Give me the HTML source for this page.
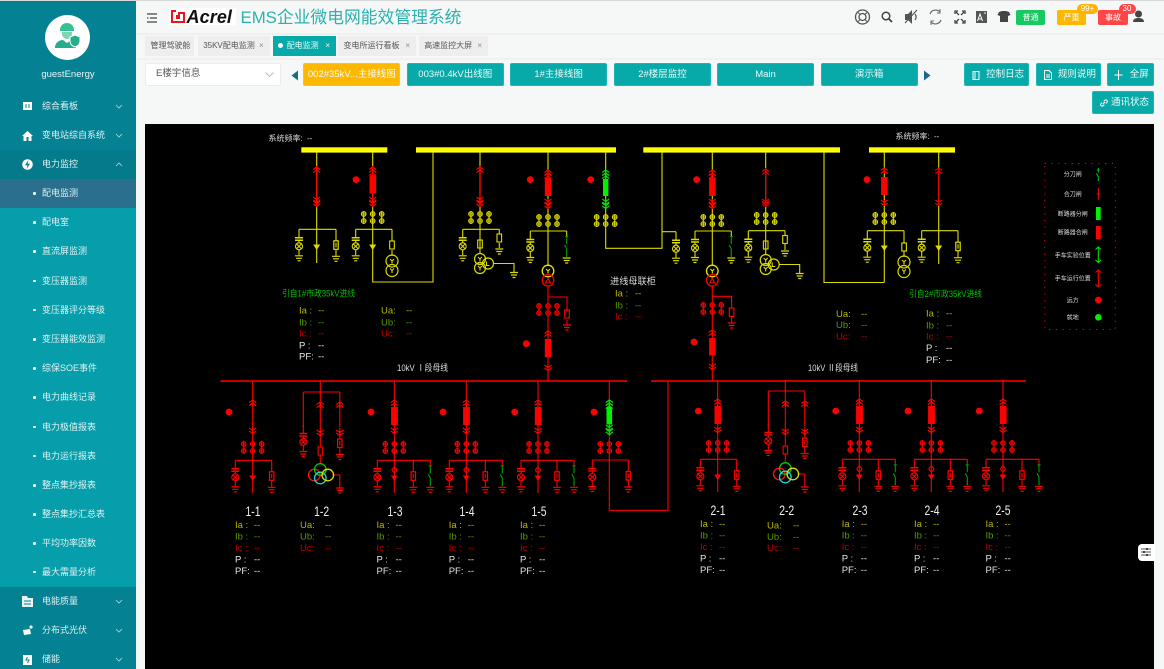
<!DOCTYPE html>
<html lang="zh"><head><meta charset="utf-8"><title>EMS</title>
<style>
*{box-sizing:border-box}
html,body{margin:0;padding:0}
body{width:1164px;height:669px;overflow:hidden;position:relative;background:#f6f7f7;font-family:"Liberation Sans","Noto Sans CJK SC",sans-serif}
#wrap{position:absolute;left:0;top:0;width:1164px;height:669px;overflow:hidden;filter:blur(.3px)}
.abs{position:absolute}
#side{position:absolute;left:0;top:1px;width:136px;height:668px;background:#048193;color:#dff2f3}
.top{position:absolute;left:0;top:0;width:1164px;height:1px;background:#d9d9d9}
.m{position:absolute;left:0;width:136px;height:29.2px;line-height:29px;font-size:9px;padding-left:42px;white-space:nowrap}
.m svg.ic{position:absolute;left:22px;top:9px}
.m svg.ch{position:absolute;left:115px;top:12px}
.s{background:#069eab}.s:before{content:"";position:absolute;left:33px;top:13px;width:2.5px;height:2.5px;border-radius:50%;background:#fff}
.tab{position:absolute;top:36px;height:19.5px;line-height:19px;background:#eeeeee;color:#555;font-size:8px;padding-left:5.5px;white-space:nowrap}
.tab i{position:absolute;right:6px;top:0;font-style:normal;color:#888;font-size:8px}
.btn{position:absolute;top:62.5px;height:23px;line-height:22px;background:#07aaa8;color:#eafafa;font-size:9.5px;text-align:center;border-radius:2px;border:1px solid #1bb5b3;white-space:nowrap}
.tag{position:absolute;top:10px;height:15px;line-height:15px;color:#fff;font-size:8px;text-align:center;border-radius:2px}
.bd{position:absolute;top:3.5px;height:10px;line-height:10px;color:#fff;font-size:8px;text-align:center;border-radius:5px}
#dia{position:absolute;left:0;top:0}
#dia text{font-family:"Liberation Sans","Noto Sans CJK SC",sans-serif;font-size:9.5px;stroke:none;fill:#ddd}
#dia .a{fill:#b8b800}#dia .b{fill:#569a00}#dia .c{fill:#c00000}#dia .w{fill:#e4e4e4}
#dia .g{fill:#00c000;font-size:9px}#dia .t{font-size:8px}#dia .l{font-size:6px;text-anchor:middle}
#dia .n{font-size:14px;text-anchor:middle;fill:#eee}
</style></head><body>
<div id="wrap">
<div class="top"></div>
<div id="side">
<div class="abs" style="left:45px;top:14px;width:45px;height:45px;border-radius:50%;background:#fff"></div>
<svg class="abs" style="left:54px;top:20px" width="30" height="30" viewBox="0 0 30 30"><path d="M6 9a7 7 0 0 1 14 0v1H6z" fill="#35c08f"/><path d="M8 11h10v2a5 5 0 0 1-10 0z" fill="#7ad6b3"/><path d="M1 27c0-6 5-8 8-8l4 3 4-3c2 0 4 .6 5 2v6z" fill="#26ad8b"/><path d="M21 14l5 2v4c0 3-2 5-5 6-3-1-5-3-5-6v-4z" fill="#26ad8b" stroke="#fff"/></svg>
<div class="abs" style="left:0;top:68px;width:136px;text-align:center;font-size:9.5px;line-height:12px;color:#e6f5f5">guestEnergy</div>

<div class="m" style="top:90.5px"><svg class="ic" width="11" height="11" viewBox="0 0 11 11"><path d="M1 1h9v8H1z" fill="#fff"/><path d="M4 3v4M7 3v4M0 10h11" stroke="#048193"/></svg>综合看板<svg class="ch" width="8" height="5" viewBox="0 0 8 5"><path d="M1 1l3 3 3-3" fill="none" stroke="#a8dfe0" stroke-width=".8"/></svg></div>
<div class="m" style="top:119.6px"><svg class="ic" width="11" height="11" viewBox="0 0 11 11"><path d="M5.5 1L11 6H9.5v5h-8V6H0z" fill="#fff"/><path d="M4.5 7h2v4h-2z" fill="#048193"/></svg>变电站综自系统<svg class="ch" width="8" height="5" viewBox="0 0 8 5"><path d="M1 1l3 3 3-3" fill="none" stroke="#a8dfe0" stroke-width=".8"/></svg></div>
<div class="m" style="top:148.8px;background:#047a8a"><svg class="ic" width="11" height="11" viewBox="0 0 11 11"><circle cx="5.5" cy="5.5" r="5.3" fill="#fff"/><path d="M6.5 1L3 6.300h2.400L4.500 10 8 4.700H5.600z" fill="#047a8a"/></svg>电力监控<svg class="ch" width="8" height="5" viewBox="0 0 8 5"><path d="M1 4l3-3 3 3" fill="none" stroke="#a8dfe0" stroke-width=".8"/></svg></div>
<div class="m s" style="top:178px;background:#2a6f8d">配电监测</div>
<div class="m s" style="top:207.200px">配电室</div>
<div class="m s" style="top:236.400px">直流屏监测</div>
<div class="m s" style="top:265.600px">变压器监测</div>
<div class="m s" style="top:294.800px">变压器评分等级</div>
<div class="m s" style="top:324px">变压器能效监测</div>
<div class="m s" style="top:353.200px">综保SOE事件</div>
<div class="m s" style="top:382.400px">电力曲线记录</div>
<div class="m s" style="top:411.600px">电力极值报表</div>
<div class="m s" style="top:440.800px">电力运行报表</div>
<div class="m s" style="top:470px">整点集抄报表</div>
<div class="m s" style="top:499.200px">整点集抄汇总表</div>
<div class="m s" style="top:528.400px">平均功率因数</div>
<div class="m s" style="top:556.600px;height:29.400px">最大需量分析</div>
<div class="m" style="top:586px"><svg class="ic" width="11" height="11" viewBox="0 0 11 11"><path d="M0 0h5l1 2h5v9H0z" fill="#e8f6f6"/><path d="M2 5h7M2 8h7" stroke="#048193"/></svg>电能质量<svg class="ch" width="8" height="5" viewBox="0 0 8 5"><path d="M1 1l3 3 3-3" fill="none" stroke="#a8dfe0" stroke-width=".8"/></svg></div>
<div class="m" style="top:615px"><svg class="ic" width="11" height="11" viewBox="0 0 11 11"><path d="M1 5l7-1 1 5-7 1z" fill="#fff"/><circle cx="9" cy="2" r="1.600" fill="#fff"/></svg>分布式光伏<svg class="ch" width="8" height="5" viewBox="0 0 8 5"><path d="M1 1l3 3 3-3" fill="none" stroke="#a8dfe0" stroke-width=".8"/></svg></div>
<div class="m" style="top:644px"><svg class="ic" width="11" height="11" viewBox="0 0 11 11"><path d="M1 1h9v10H1z" fill="#fff"/><path d="M5.500 3L4 6h3l-1.500 3" stroke="#048193" fill="none"/></svg>储能<svg class="ch" width="8" height="5" viewBox="0 0 8 5"><path d="M1 1l3 3 3-3" fill="none" stroke="#a8dfe0" stroke-width=".8"/></svg></div>
</div>

<!-- header -->
<svg class="abs" style="left:147px;top:13px" width="11" height="10" viewBox="0 0 11 10"><path d="M0 1h10M3 5h7M0 9h10M0 5h1.500" stroke="#444" stroke-width="1.300"/></svg>
<div class="abs" style="left:169px;top:8px;width:67px;height:17px;background:#fff"></div>
<svg class="abs" style="left:171px;top:10px" width="14" height="14" viewBox="0 0 14 14"><path d="M0 0h5v2H2v9h10V4h-3v5H5V5h2V2h7v11H0z" fill="#e8161c"/></svg>
<div class="abs" style="left:186.500px;top:7px;font:italic bold 18px/20px 'Liberation Sans',sans-serif;color:#111;letter-spacing:.1px">Acrel</div>
<div class="abs" style="left:240.500px;top:6px;font-size:16.800px;line-height:24px;color:#2bb2ae;white-space:nowrap">EMS企业微电网能效管理系统</div>
<div class="abs" style="left:136px;top:33px;width:1028px;height:2px;background:#f0f0f0"></div>

<svg class="abs" style="left:850px;top:5px" width="300" height="24" viewBox="850 5 300 24" fill="none">
<circle cx="862.500" cy="17" r="7" stroke="#555" stroke-width="1.300"/><circle cx="862.500" cy="17" r="3.500" stroke="#555" stroke-width="1.300"/><path d="M858 12.500l2 2M867 12.500l-2 2M858 21.500l2-2M867 21.500l-2-2" stroke="#555"/>
<circle cx="886" cy="16" r="3.800" stroke="#444" stroke-width="1.500"/><path d="M889 19l3 3" stroke="#444" stroke-width="1.800"/>
<path d="M905 14h3l4-4v14l-4-4h-3z" fill="#555"/><path d="M905 23l12-13M915 14c1.500 2 1.500 4 0 6" stroke="#555" stroke-width="1.200"/>
<path d="M930 14a6 6 0 0 1 10-2M941 20a6 6 0 0 1-10 2" stroke="#666" stroke-width="1.200"/><path d="M940 9v4h-3M931 25v-4h3" stroke="#666"/>
<path d="M955 14v-3h3M962 11h3v3M965 20v3h-3M958 23h-3v-3M956 12l3 3M964 12l-3 3M964 22l-3-3M956 22l3-3" stroke="#444" stroke-width="1.300"/>
<rect x="976" y="11" width="11" height="12" fill="#555"/><path d="M977.500 21l2.500-7 2.500 7M978.500 19h3M984 13h2" stroke="#fff"/>
<path d="M999 12l3-1h4l3 1 1.500 3-2.500 1v6h-8v-6l-2.500-1z" fill="#444"/>
<circle cx="1138.500" cy="14" r="3.500" fill="#444"/><path d="M1133 22c0-3 2.500-4 5.500-4s5.500 1 5.500 4z" fill="#444"/>
</svg>
<div class="tag" style="left:1016px;width:29px;background:#18c860">普通</div>
<div class="tag" style="left:1057px;width:29px;background:#ffb800">严重</div>
<div class="tag" style="left:1098px;width:30px;background:#ff4545">事故</div>
<div class="bd" style="left:1077px;width:21px;background:#ffb000">99+</div>
<div class="bd" style="left:1118.500px;width:17px;background:#ff4545">30</div>

<!-- tabs -->
<div class="tab" style="left:145px;width:49px">管理驾驶舱</div>
<div class="tab" style="left:197.700px;width:72px">35KV配电监测<i>×</i></div>
<div class="tab" style="left:272.700px;width:63.300px;background:#07aaa8;color:#e8fafa;padding-left:14px"><span class="abs" style="left:5px;top:7px;width:5px;height:5px;border-radius:50%;background:#fff"></span>配电监测<i style="color:#e8fafa">×</i></div>
<div class="tab" style="left:338px;width:78px">变电所运行看板<i>×</i></div>
<div class="tab" style="left:418.700px;width:69.300px">高速监控大屏<i>×</i></div>
<div class="abs" style="left:136px;top:57.500px;width:1028px;height:2px;background:#f1f1f1"></div>

<!-- toolbar -->
<div class="abs" style="left:145px;top:63px;width:136px;height:22.500px;background:#fff;border:1px solid #ececec;border-radius:2px;font-size:9.500px;line-height:20px;color:#555;padding-left:10px">E楼宇信息<svg class="abs" style="left:119px;top:8px" width="9" height="5" viewBox="0 0 9 5"><path d="M.5.500l4 4 4-4" fill="none" stroke="#bbb"/></svg></div>
<svg class="abs" style="left:291px;top:70px" width="8" height="11"><path d="M7 .500V10.500L.500 5.500z" fill="#1b6a8a"/></svg>
<div class="btn" style="left:303.300px;width:97px;background:#ffb800;border-color:#ffc01f">002#35kV...主接线图</div>
<div class="btn" style="left:407px;width:96.500px">003#0.4kV出线图</div>
<div class="btn" style="left:510.300px;width:96.700px">1#主接线图</div>
<div class="btn" style="left:614px;width:97px">2#楼层监控</div>
<div class="btn" style="left:717px;width:97px">Main</div>
<div class="btn" style="left:820.700px;width:97px">演示箱</div>
<svg class="abs" style="left:923px;top:70px" width="8" height="11"><path d="M1 .500V10.500L7.500 5.500z" fill="#1b6a8a"/></svg>
<div class="btn" style="left:964px;width:65.300px;height:23.500px;padding-left:17px">控制日志<svg class="abs" style="left:7px;top:7px" width="8" height="9"><path d="M1 .500h6v8H1zM3 .500v8" fill="none" stroke="#fff"/></svg></div>
<div class="btn" style="left:1035.700px;width:65.300px;height:23.500px;padding-left:17px">规则说明<svg class="abs" style="left:7px;top:6px" width="8" height="10"><path d="M.500.500h4.500l2.500 2.500v6.500h-7zM2 5h4M2 7h4" fill="none" stroke="#fff"/></svg></div>
<div class="btn" style="left:1107.300px;width:47px;height:23.500px;padding-left:17px">全屏<svg class="abs" style="left:6px;top:6px" width="9" height="10"><path d="M4.500 0v10M.500 5h8" stroke="#fff"/></svg></div>
<div class="btn" style="left:1091.700px;top:90.500px;width:62.600px;height:23.500px;padding-left:14px">通讯状态<svg class="abs" style="left:7px;top:7px" width="8" height="8"><path d="M3 5l2-2M2 3.500L.800 5a1.500 1.500 0 0 0 2 2l1.500-1.300M6 4.500L7.200 3a1.500 1.500 0 0 0-2-2L3.700 2.300" fill="none" stroke="#fff"/></svg></div>

<div class="abs" style="left:145px;top:124px;width:1009px;height:545px;background:#000"></div>

<svg id="dia" width="1164" height="669" viewBox="0 0 1164 669" fill="none" stroke="currentColor" stroke-width="1">
<defs>
<path id="up" d="M-3.500 2.500L0 0L3.500 2.500M-3.500 5.500L0 3L3.500 5.500M0 0V6" stroke-width="1.200"/>
<path id="dn" d="M-3.500 0L0 2.500L3.500 0M-3.500 3L0 5.500L3.500 3M0 0V6" stroke-width="1.200"/>
<g id="fu"><g id="fp"><circle cx="-9" cy="0" r="2.300"/><circle cx="-9" cy="7" r="2.300"/><path d="M-11.500 0H-6.500M-11.500 7H-6.500M-9 -3V10"/></g><use href="#fp" x="9"/><use href="#fp" x="18"/></g>
<path id="gn" d="M-4 0H4M-3 2.500H3M-1.500 5H1.500" stroke-width="1.200"/>
<g id="lb"><path d="M0 0V8M0 11V13.500M0 20.500V26"/><path d="M-4 8.500H4M-4 11H4" stroke-width="1.500"/><circle cy="17" r="3.500"/><path d="M-2.300 14.700L2.300 19.300M2.300 14.700L-2.300 19.300"/><use href="#gn" y="26.500"/></g>
<g id="rb"><path d="M0 0V11.500M0 20V26.500"/><rect x="-2.200" y="11.500" width="4.400" height="8.500" stroke-width="1.200"/><path d="M0 13.500V18"/><use href="#gn" y="27"/></g>
<path id="ar" d="M-2.500 0H2.500L0 4z" fill="currentColor"/>
<g id="sw"><path d="M0 0V5"/><path d="M0 5V13M-2 14L0 18V26M-1.500 5.500H1.500" color="#0a0" stroke="#00a000"/><use href="#gn" y="27"/></g>

<!-- 10kV feeder: breaker, branches -->
<g id="tp"><path d="M0 0V112"/><use href="#up" y="19"/><use href="#dn" y="47"/><use href="#fu" y="63"/></g>
<rect id="bk" x="-3.200" y="26" width="6.800" height="18" fill="currentColor" stroke="none"/>
<g id="f3"><use href="#tp"/><use href="#bk"/><path d="M-17 79.300H36"/><use href="#lb" x="-17" y="79.300"/><circle cy="89" r="2.300"/><use href="#ar" y="95"/><use href="#rb" x="19" y="79.300"/><use href="#sw" x="36" y="79.300"/></g>
<g id="f2"><path d="M0 0V11M-17 11H19.500M-17 11V46M0 11V70M19.500 11V46"/><use href="#up" y="21"/><use href="#dn" y="49"/><use href="#up" x="19.500" y="21"/><use href="#dn" x="19.500" y="49"/><use href="#lb" x="-17" y="44"/><use href="#rb" x="19.500" y="46.500"/><rect x="-2.200" y="66" width="4.500" height="8" fill="#000"/><path d="M0 74V82M12 94H19.500V107"/><use href="#gn" x="19.500" y="107"/>
<circle cx="-6" cy="94" r="5.800" stroke="#ff1010" stroke-width="1.300"/><circle cx="0" cy="88.500" r="5.800" stroke="#0c0" stroke-width="1.300"/><circle cx="0" cy="97" r="5.800" stroke="#1dd" stroke-width="1.300"/><circle cx="7.500" cy="94" r="5.800" stroke="#dd0" stroke-width="1.300"/></g>
<!-- 35kV left/right branches -->
<g id="yy"><circle cy="0" r="6" stroke-width="1.200"/><circle cy="9.500" r="6" stroke-width="1.200"/><path d="M-2 -2L0 0L2 -2M0 0V2.500M-2 7.500L0 9.500L2 7.500M0 9.500V12"/></g>
<g id="vt"><circle cy="0" r="5.500" stroke-width="1.200"/><circle cy="9" r="5.500" stroke-width="1.200"/><circle cx="8" cy="4.500" r="5.500" stroke-width="1.200"/><path d="M-2 -2L0 0L2 -2M0 0V2.500M-2 7L0 9L2 7M0 9V11.500M6.500 2.500V6.500H9.500M13.500 4.500H34V13"/><use href="#gn" x="34" y="13.500"/></g>
<g id="yd"><circle cy="0" r="5.800" stroke="#e6e600" stroke-width="1.300"/><circle cy="9.300" r="5.800" stroke="#f00" stroke-width="1.300"/><path d="M-2 -2L0 0L2 -2M0 0V2.500" stroke="#e6e600"/><path d="M-2.500 12L0 7.500L2.500 12z" stroke="#f00"/></g>
</defs>

<!-- legend & busbars -->
<g fill="#ffff00" stroke="none"><rect x="301.300" y="147.300" width="86" height="5.300"/><rect x="416" y="147.300" width="200" height="5.300"/><rect x="643.300" y="147.300" width="196.700" height="5.300"/><rect x="869" y="147.300" width="86" height="5.300"/></g>

<!-- 35kV incoming cabinets: yellow -->
<g color="#dcdc00" stroke-width="1.100">
<!-- A -->
<g transform="translate(316.700,0)"><path d="M0 152V263M-17.700 229.300H19.300"/><use href="#lb" x="-17.700" y="229.300"/><use href="#ar" y="245"/><use href="#rb" x="19.300" y="229.300"/><g color="#f00"><path d="M0 166V205" stroke-width="1.300"/><use href="#up" y="167"/><use href="#dn" y="197"/><use href="#dn" y="201"/></g></g>
<!-- B -->
<g transform="translate(372.700,0)"><path d="M0 152V282H60.300V152M-17 229.300H19.300" /><use href="#fu" y="214"/><use href="#lb" x="-17" y="229.300"/><use href="#ar" y="245"/><path d="M19.300 229.300V241M19.300 250V256"/><rect x="17" y="241" width="4.600" height="8"/><use href="#yy" x="19.300" y="261"/><g color="#f00"><use href="#up" y="167"/><use href="#up" y="170"/><use href="#dn" y="197"/><use href="#dn" y="201"/><rect x="-3.200" y="175.500" width="6.600" height="18" fill="currentColor" stroke="none"/><path d="M0 166V205" stroke-width="1.200"/></g></g>
<!-- C -->
<g transform="translate(480,0)"><path d="M0 152V254M-17.300 229.300H19.300"/><use href="#fu" y="214"/><use href="#lb" x="-17.300" y="229.300"/><rect x="-2.300" y="240" width="4.600" height="8"/><use href="#vt" y="259"/><path d="M19.300 229.300V234M19.300 243V248"/><rect x="17" y="234" width="4.600" height="8"/><use href="#gn" x="19.300" y="249"/><g color="#f00"><path d="M0 166V205" stroke-width="1.300"/><use href="#up" y="167"/><use href="#dn" y="197"/><use href="#dn" y="201"/></g></g>
<!-- D -->
<g transform="translate(548,0)"><path d="M0 152V266M-17.700 231H18.700"/><use href="#fu" y="217"/><use href="#lb" x="-17.700" y="231"/><use href="#sw" x="18.700" y="231"/><use href="#yd" y="271"/><g color="#f00"><use href="#up" y="170"/><use href="#up" y="173"/><use href="#dn" y="199"/><use href="#dn" y="203"/><rect x="-3.200" y="178" width="6.600" height="18" fill="currentColor" stroke="none"/><path d="M0 286V381M0 297H19V311M19 320V325" stroke-width="1.100"/><rect x="16.700" y="310" width="4.600" height="8"/><use href="#gn" x="19" y="325"/><use href="#fu" y="306"/><use href="#up" y="331"/><rect x="-3.200" y="339" width="6.600" height="18" fill="currentColor" stroke="none"/><use href="#dn" y="365"/></g></g>
<!-- E -->
<g transform="translate(605.700,0)"><path d="M0 152V248.300H56.300V152M56.300 231.700H70.300"/><use href="#fu" y="217"/><use href="#lb" x="70.300" y="231.700"/><g color="#00e000"><use href="#up" y="170"/><use href="#up" y="173"/><use href="#dn" y="199"/><use href="#dn" y="203"/><rect x="-2.700" y="179" width="5.400" height="17" fill="#00f000" stroke="none"/></g></g>
<!-- F -->
<g transform="translate(712.300,0)"><path d="M0 152V266M-17.300 231H19"/><use href="#fu" y="217"/><use href="#lb" x="-17.300" y="231"/><use href="#sw" x="19" y="231"/><use href="#yd" y="271"/><g color="#f00"><use href="#up" y="170"/><use href="#up" y="173"/><use href="#dn" y="199"/><use href="#dn" y="203"/><rect x="-3.200" y="178" width="6.600" height="18" fill="currentColor" stroke="none"/><path d="M0 286V381M0 296.300H19.300V308M19.300 317V323" stroke-width="1.100"/><rect x="17" y="308" width="4.600" height="8.500"/><use href="#gn" x="19.300" y="323"/><use href="#fu" y="305"/><use href="#up" y="330"/><rect x="-3.200" y="338" width="6.600" height="17.500" fill="currentColor" stroke="none"/><use href="#dn" y="364"/></g></g>
<!-- G -->
<g transform="translate(765.700,0)"><path d="M0 152V255M-17.400 230.700H19.300"/><use href="#fu" y="215"/><use href="#lb" x="-17.400" y="230.700"/><rect x="-2.300" y="241" width="4.600" height="8"/><use href="#vt" y="260"/><path d="M19.300 230.700V236M19.300 244V250"/><rect x="17" y="235.500" width="4.600" height="8"/><use href="#gn" x="19.300" y="251"/><g color="#d00"><path d="M0 168V205" stroke-width="1.300"/><use href="#up" y="169"/><use href="#dn" y="199"/><use href="#dn" y="201"/></g></g>
<!-- H -->
<path d="M824 152V282.500H884.300" stroke="#dcdc00" stroke-width="1.100"/>
<g transform="translate(884.300,0)"><path d="M0 152V282.500M-17 230.700H19.700"/><use href="#fu" y="215"/><use href="#lb" x="-17" y="230.700"/><use href="#ar" y="246"/><path d="M19.700 230.700V243M19.700 251V257"/><rect x="17.500" y="243" width="4.600" height="8"/><use href="#yy" x="19.700" y="262"/><g color="#f00"><use href="#up" y="168"/><use href="#dn" y="200"/><rect x="-3.200" y="177" width="6.600" height="18" fill="currentColor" stroke="none"/></g></g>
<!-- I -->
<g transform="translate(938.700,0)"><path d="M0 152V264M-17 230.700H19.300"/><use href="#lb" x="-17" y="230.700"/><use href="#ar" y="246"/><use href="#rb" x="19.300" y="230.700"/><g color="#d00"><path d="M0 168V205" stroke-width="1.300"/><use href="#up" y="168"/><use href="#dn" y="200"/></g></g>
</g>

<!-- 10kV -->
<g color="#f00" stroke="#f00" stroke-width="1.100">
<path d="M220.500 381H627M651 381H1026" stroke-width="1.400"/>
<g transform="translate(252.700,381)"><use href="#tp"/><path d="M-17.400 79.300H19"/><use href="#lb" x="-17.400" y="79.300"/><use href="#ar" y="95"/><use href="#rb" x="19" y="79.300"/></g>
<use href="#f2" x="320.300" y="381"/>
<use href="#f3" x="394.300" y="381"/><use href="#f3" x="466.300" y="381"/><use href="#f3" x="538" y="381"/>
<g transform="translate(609.300,381)"><path d="M0 0V129.300H58.700V0M-17 79H19"/><use href="#fu" y="63"/><use href="#lb" x="-17" y="79"/><use href="#rb" x="19" y="79"/></g>
<g transform="translate(609.300,381)" color="#00e000" stroke="#00e000"><use href="#up" y="19"/><use href="#up" y="22"/><use href="#dn" y="44"/><use href="#dn" y="48"/><rect x="-2.800" y="26" width="5.600" height="17.500" fill="#00f000" stroke="none"/></g>
<g transform="translate(717.700,380)"><use href="#tp"/><use href="#bk"/><path d="M-17.400 79.300H19"/><use href="#lb" x="-17.400" y="79.300"/><use href="#ar" y="95"/><use href="#rb" x="19" y="79.300"/></g>
<use href="#f2" x="785.300" y="380"/>
<use href="#f3" x="859.300" y="380"/><use href="#f3" x="931.300" y="380"/><use href="#f3" x="1003" y="380"/>
</g>

<!-- status dots -->
<g fill="#f00" stroke="none">
<circle cx="356" cy="179.600" r="3.400"/><circle cx="530.300" cy="179.600" r="3.400"/><circle cx="590.700" cy="179.600" r="3.400"/><circle cx="696.700" cy="179.600" r="3.400"/><circle cx="867" cy="179.600" r="3.400"/><circle cx="526.300" cy="343.700" r="3.400"/><circle cx="694" cy="342" r="3.400"/>
<circle cx="229" cy="412" r="3.400"/><circle cx="371" cy="412" r="3.400"/><circle cx="443" cy="412" r="3.400"/><circle cx="514.700" cy="412" r="3.400"/><circle cx="594" cy="412" r="3.400"/><circle cx="698.300" cy="411" r="3.400"/><circle cx="835.700" cy="411" r="3.400"/><circle cx="908" cy="411" r="3.400"/><circle cx="979.300" cy="411" r="3.400"/>
</g>

<!-- legend -->
<rect x="1044.800" y="163.500" width="70.500" height="166" stroke="#f00" stroke-dasharray="1.200 5.500"/>
<g stroke-width="1.100">
<path d="M1098.300 168V172.500M1096.500 173.500L1098.300 177V181M1096.800 170H1099.800" stroke="#00c000"/>
<path d="M1098.300 188V200M1096.800 194H1099.800" stroke="#f00"/>
<rect x="1096" y="207" width="4.700" height="13" fill="#00f000" stroke="none"/><rect x="1096" y="226" width="4.700" height="13" fill="#f00" stroke="none"/>
<path d="M1098.300 247V262.500M1095.500 249.500L1098.300 247L1101 249.500M1095.500 260L1098.300 262.500L1101 260" stroke="#00e000"/>
<path d="M1098.300 270V287M1095.500 272.500L1098.300 270L1101 272.500M1095.500 284.500L1098.300 287L1101 284.500" stroke="#f00"/>
<circle cx="1098.300" cy="300" r="3.300" fill="#f00" stroke="none"/><circle cx="1098.300" cy="317.300" r="3.300" fill="#00f000" stroke="none"/>
</g>
<text class="l" x="1072.700" y="176.500">分刀闸</text><text class="l" x="1072.700" y="196.500">合刀闸</text><text class="l" x="1072.700" y="216">断路器分闸</text><text class="l" x="1072.700" y="234.500">断路器合闸</text><text class="l" x="1072.700" y="257.500">手车实验位置</text><text class="l" x="1072.700" y="280.500">手车运行位置</text><text class="l" x="1072.700" y="302.500">远方</text><text class="l" x="1072.700" y="319.500">就地</text>

<!-- labels -->
<text class="t" x="268.500" y="141">系统频率:<tspan x="307">--</tspan></text>
<text class="t" x="895.500" y="139">系统频率:<tspan x="934">--</tspan></text>
<text class="g" x="282" y="296.500" textLength="73" lengthAdjust="spacingAndGlyphs">引自1#市政35kV进线</text>
<text class="g" x="909" y="297" textLength="73" lengthAdjust="spacingAndGlyphs">引自2#市政35kV进线</text>
<text x="397" y="371" style="font-size:9px" textLength="51" lengthAdjust="spacingAndGlyphs">10kV Ⅰ段母线</text>
<text x="808" y="371" style="font-size:9px" textLength="50" lengthAdjust="spacingAndGlyphs">10kV Ⅱ段母线</text>
<text x="610" y="284.500" style="font-size:9.500px" textLength="46" lengthAdjust="spacingAndGlyphs">进线母联柜</text>

<g transform="translate(299,313.500)"><text class="a">Ia :<tspan x="19">--</tspan></text><text class="b" y="12">Ib :<tspan x="19">--</tspan></text><text class="c" y="23">Ic :<tspan x="19">--</tspan></text><text class="w" y="35">P :<tspan x="19">--</tspan></text><text class="w" y="46">PF:<tspan x="19">--</tspan></text></g>
<g transform="translate(381,313.500)"><text class="a">Ua:<tspan x="25">--</tspan></text><text class="b" y="12">Ub:<tspan x="25">--</tspan></text><text class="c" y="23">Uc:<tspan x="25">--</tspan></text></g>
<g transform="translate(615,296.500)"><text class="a">Ia :<tspan x="20">--</tspan></text><text class="b" y="12">Ib :<tspan x="20">--</tspan></text><text class="c" y="23">Ic :<tspan x="20">--</tspan></text></g>
<g transform="translate(836,317)"><text class="a">Ua:<tspan x="25">--</tspan></text><text class="b" y="11">Ub:<tspan x="25">--</tspan></text><text class="c" y="22.500">Uc:<tspan x="25">--</tspan></text></g>
<g transform="translate(926,316.500)"><text class="a">Ia :<tspan x="20">--</tspan></text><text class="b" y="12">Ib :<tspan x="20">--</tspan></text><text class="c" y="23">Ic :<tspan x="20">--</tspan></text><text class="w" y="34.500">P :<tspan x="20">--</tspan></text><text class="w" y="46.500">PF:<tspan x="20">--</tspan></text></g>

<text class="n" x="253" y="516" textLength="15" lengthAdjust="spacingAndGlyphs">1-1</text>
<text class="n" x="321.600" y="516" textLength="15" lengthAdjust="spacingAndGlyphs">1-2</text>
<text class="n" x="395" y="516" textLength="15" lengthAdjust="spacingAndGlyphs">1-3</text>
<text class="n" x="467" y="516" textLength="15" lengthAdjust="spacingAndGlyphs">1-4</text>
<text class="n" x="539" y="516" textLength="15" lengthAdjust="spacingAndGlyphs">1-5</text>
<text class="n" x="718" y="515" textLength="15" lengthAdjust="spacingAndGlyphs">2-1</text>
<text class="n" x="786.700" y="515" textLength="15" lengthAdjust="spacingAndGlyphs">2-2</text>
<text class="n" x="860" y="515" textLength="15" lengthAdjust="spacingAndGlyphs">2-3</text>
<text class="n" x="932" y="515" textLength="15" lengthAdjust="spacingAndGlyphs">2-4</text>
<text class="n" x="1003" y="515" textLength="15" lengthAdjust="spacingAndGlyphs">2-5</text>

<g transform="translate(235,528)"><text class="a">Ia :<tspan x="19">--</tspan></text><text class="b" y="11.500">Ib :<tspan x="19">--</tspan></text><text class="c" y="23">Ic :<tspan x="19">--</tspan></text><text class="w" y="34.500">P :<tspan x="19">--</tspan></text><text class="w" y="46">PF:<tspan x="19">--</tspan></text></g>
<g transform="translate(300,528)"><text class="a">Ua:<tspan x="25">--</tspan></text><text class="b" y="11.500">Ub:<tspan x="25">--</tspan></text><text class="c" y="23">Uc:<tspan x="25">--</tspan></text></g>
<g transform="translate(376.500,528)"><text class="a">Ia :<tspan x="19">--</tspan></text><text class="b" y="11.500">Ib :<tspan x="19">--</tspan></text><text class="c" y="23">Ic :<tspan x="19">--</tspan></text><text class="w" y="34.500">P :<tspan x="19">--</tspan></text><text class="w" y="46">PF:<tspan x="19">--</tspan></text></g>
<g transform="translate(448.700,528)"><text class="a">Ia :<tspan x="19">--</tspan></text><text class="b" y="11.500">Ib :<tspan x="19">--</tspan></text><text class="c" y="23">Ic :<tspan x="19">--</tspan></text><text class="w" y="34.500">P :<tspan x="19">--</tspan></text><text class="w" y="46">PF:<tspan x="19">--</tspan></text></g>
<g transform="translate(520,528)"><text class="a">Ia :<tspan x="19">--</tspan></text><text class="b" y="11.500">Ib :<tspan x="19">--</tspan></text><text class="c" y="23">Ic :<tspan x="19">--</tspan></text><text class="w" y="34.500">P :<tspan x="19">--</tspan></text><text class="w" y="46">PF:<tspan x="19">--</tspan></text></g>
<g transform="translate(700,527)"><text class="a">Ia :<tspan x="19">--</tspan></text><text class="b" y="11.500">Ib :<tspan x="19">--</tspan></text><text class="c" y="23">Ic :<tspan x="19">--</tspan></text><text class="w" y="34.500">P :<tspan x="19">--</tspan></text><text class="w" y="46">PF:<tspan x="19">--</tspan></text></g>
<g transform="translate(767,528.500)"><text class="a">Ua:<tspan x="26">--</tspan></text><text class="b" y="11.500">Ub:<tspan x="26">--</tspan></text><text class="c" y="22.500">Uc:<tspan x="26">--</tspan></text></g>
<g transform="translate(841.700,527)"><text class="a">Ia :<tspan x="19">--</tspan></text><text class="b" y="11.500">Ib :<tspan x="19">--</tspan></text><text class="c" y="23">Ic :<tspan x="19">--</tspan></text><text class="w" y="34.500">P :<tspan x="19">--</tspan></text><text class="w" y="46">PF:<tspan x="19">--</tspan></text></g>
<g transform="translate(914,527)"><text class="a">Ia :<tspan x="19">--</tspan></text><text class="b" y="11.500">Ib :<tspan x="19">--</tspan></text><text class="c" y="23">Ic :<tspan x="19">--</tspan></text><text class="w" y="34.500">P :<tspan x="19">--</tspan></text><text class="w" y="46">PF:<tspan x="19">--</tspan></text></g>
<g transform="translate(985.500,527)"><text class="a">Ia :<tspan x="19">--</tspan></text><text class="b" y="11.500">Ib :<tspan x="19">--</tspan></text><text class="c" y="23">Ic :<tspan x="19">--</tspan></text><text class="w" y="34.500">P :<tspan x="19">--</tspan></text><text class="w" y="46">PF:<tspan x="19">--</tspan></text></g>
</svg>

<div class="abs" style="left:1137.500px;top:543.500px;width:17px;height:17px;background:#fff;border-radius:4px 0 0 4px"></div>
<svg class="abs" style="left:1141px;top:547px" width="10" height="10" viewBox="0 0 10 10"><path d="M0 2h10M0 5h10M0 8h10" stroke="#555"/><path d="M6 1v2M3 4v2M6 7v2" stroke="#222" stroke-width="1.500"/></svg>
</div>
</body></html>
